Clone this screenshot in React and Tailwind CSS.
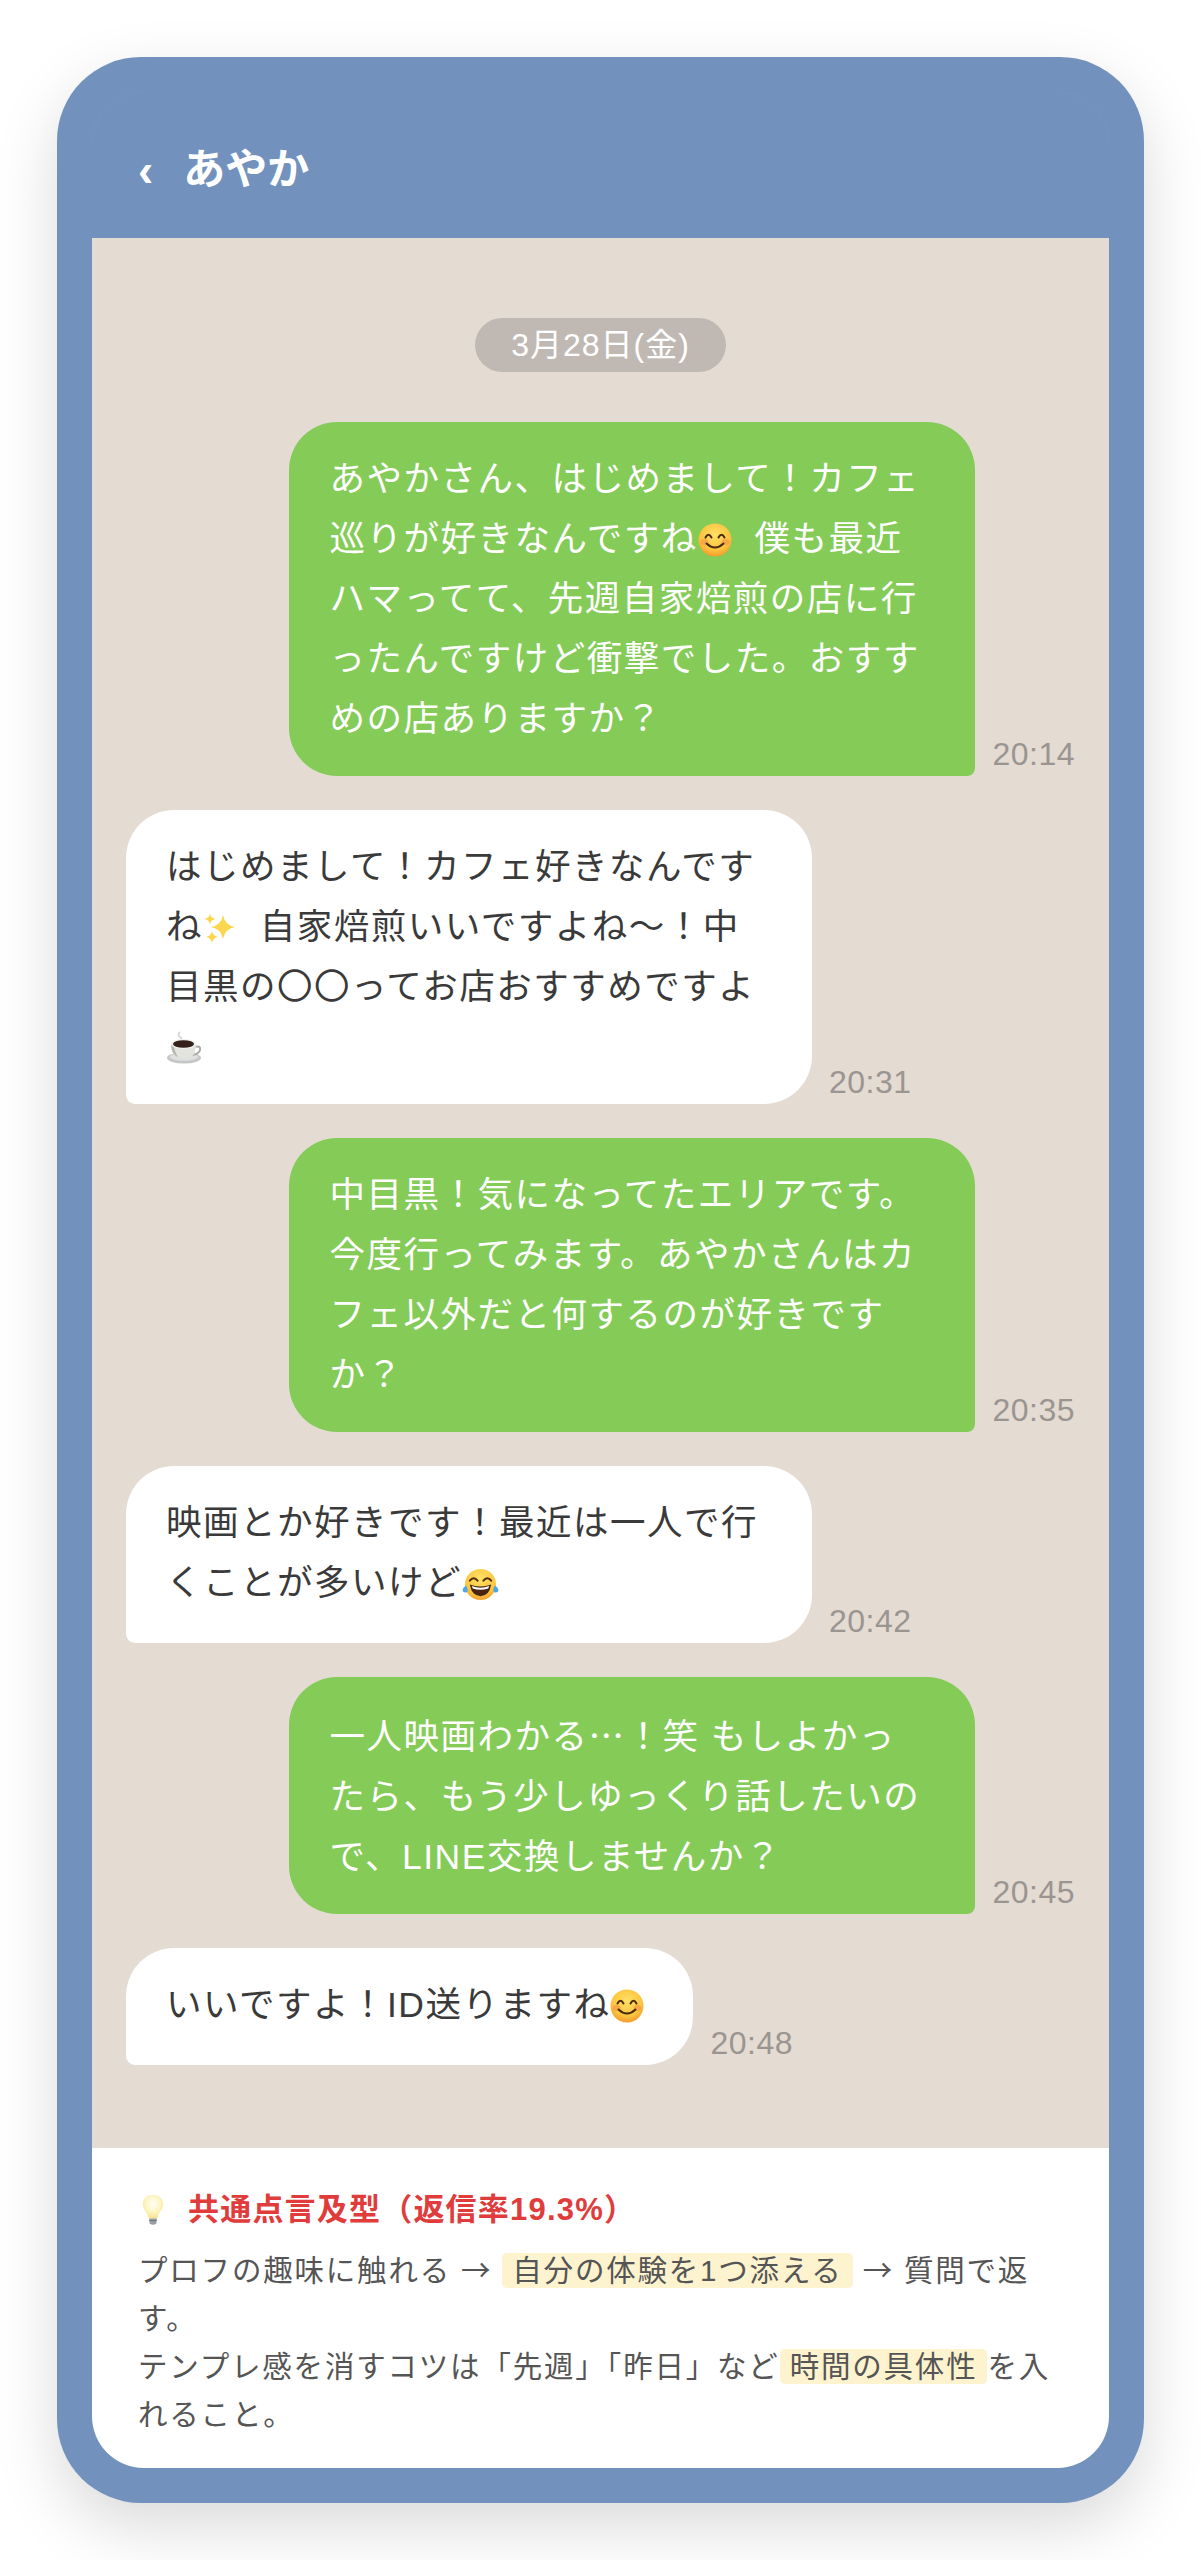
import React from 'react';

const FONT = "font-['Liberation_Sans','Noto_Sans_CJK_JP',sans-serif]";

// Punctuation that should come from the CJK face, not Liberation
const Cjk = ({ children }) => <span className="font-['Noto_Sans_CJK_JP',sans-serif]">{children}</span>;

// --- Emoji drawings (no colour emoji font on the page) ---
const SmileEmoji = () => (
    <svg viewBox="0 0 34 34" className="inline-block w-[34px] h-[34px] align-[-6px]">
        <defs>
            <radialGradient id="smileFace" cx="50%" cy="35%" r="70%">
                <stop offset="0%" stopColor="#ffe066" />
                <stop offset="65%" stopColor="#fcc43c" />
                <stop offset="100%" stopColor="#f0912a" />
            </radialGradient>
        </defs>
        <circle cx="17" cy="17" r="16.5" fill="url(#smileFace)" />
        <ellipse cx="6.5" cy="19" rx="4" ry="3" fill="#f58a4a" opacity="0.55" />
        <ellipse cx="27.5" cy="19" rx="4" ry="3" fill="#f58a4a" opacity="0.55" />
        <path d="M7.5 14.5 Q10.5 9 13.5 14.5" fill="none" stroke="#4a2c10" strokeWidth="2" strokeLinecap="round" />
        <path d="M20.5 14.5 Q23.5 9 26.5 14.5" fill="none" stroke="#4a2c10" strokeWidth="2" strokeLinecap="round" />
        <path d="M8.5 20.5 Q17 28.5 25.5 20.5" fill="none" stroke="#4a2c10" strokeWidth="2" strokeLinecap="round" />
    </svg>
);

const JoyEmoji = () => (
    <svg viewBox="0 0 38 34" className="inline-block w-[37px] h-[33px] align-[-6px]">
        <defs>
            <radialGradient id="joyFace" cx="50%" cy="30%" r="75%">
                <stop offset="0%" stopColor="#ffe066" />
                <stop offset="70%" stopColor="#fcc43c" />
                <stop offset="100%" stopColor="#f09a2a" />
            </radialGradient>
        </defs>
        <circle cx="19" cy="17" r="16" fill="url(#joyFace)" />
        <path d="M8 13 Q12 8 16 13" fill="none" stroke="#4a2c10" strokeWidth="2" strokeLinecap="round" />
        <path d="M22 13 Q26 8 30 13" fill="none" stroke="#4a2c10" strokeWidth="2" strokeLinecap="round" />
        <path d="M8 17 Q19 21 30 17 Q28 29 19 29 Q10 29 8 17Z" fill="#4a2410" />
        <path d="M10 18.5 Q19 22 28 18.5 L27 21 Q19 24 11 21Z" fill="#fff" />
        <path d="M4 18 Q7 22 5 25 Q1 26 0.5 23 Q1 20 4 18Z" fill="#4aa8e8" />
        <path d="M34 18 Q31 22 33 25 Q37 26 37.5 23 Q37 20 34 18Z" fill="#4aa8e8" />
    </svg>
);

const Sparkle = ({ x, y, r }) => (
    <path
        d={`M${x} ${y - r} Q${x + r * 0.15} ${y - r * 0.15} ${x + r} ${y} Q${x + r * 0.15} ${y + r * 0.15} ${x} ${y + r} Q${x - r * 0.15} ${y + r * 0.15} ${x - r} ${y} Q${x - r * 0.15} ${y - r * 0.15} ${x} ${y - r}Z`}
        fill="#fbd64e"
    />
);

const SparklesEmoji = () => (
    <svg viewBox="0 0 34 34" className="inline-block w-[34px] h-[34px] align-[-6px]">
        <Sparkle x={20} y={16} r={12} />
        <Sparkle x={7} y={8} r={5.5} />
        <Sparkle x={9} y={26} r={6} />
    </svg>
);

const CoffeeEmoji = () => (
    <svg viewBox="0 0 36 36" className="inline-block w-[36px] h-[36px] align-[-6px]">
        <path d="M14 3 Q11 6 14 8 Q17 10 14 12" fill="none" stroke="#d8d8d8" strokeWidth="2" />
        <ellipse cx="18" cy="29" rx="17" ry="5.5" fill="#c4c7c6" />
        <ellipse cx="18" cy="28" rx="14" ry="3.8" fill="#dfe1e0" />
        <path d="M28 18 Q35 16 34 21 Q33 25 26 26" fill="none" stroke="#a9aba6" strokeWidth="2" />
        <path d="M5 15 Q5 28 14 29 L22 29 Q30 28 30 15Z" fill="#e4e4de" />
        <path d="M5 16 Q6 26 12 28 Q8 22 8 16Z" fill="#b5b6ad" />
        <ellipse cx="17.5" cy="15" rx="12.5" ry="5" fill="#f0f0ec" />
        <ellipse cx="17.5" cy="15" rx="10.5" ry="3.8" fill="#33211a" />
    </svg>
);

const BulbEmoji = () => (
    <svg viewBox="0 0 26 38" className="w-[22px] h-[34px] shrink-0">
        <defs>
            <radialGradient id="bulbGlass" cx="50%" cy="38%" r="60%">
                <stop offset="0%" stopColor="#fffef5" />
                <stop offset="60%" stopColor="#fdf5c4" />
                <stop offset="100%" stopColor="#f8e58e" />
            </radialGradient>
        </defs>
        <path d="M13 1 C5 1 1 6.5 1 12.5 C1 19 7 22 8 29 L18 29 C19 22 25 19 25 12.5 C25 6.5 21 1 13 1Z" fill="url(#bulbGlass)" />
        <path d="M8.5 29 L17.5 29 L17 35 Q13 38 9 35Z" fill="#9a9ea3" />
        <path d="M8.5 31.5 L17.5 31.5" stroke="#6f7479" strokeWidth="1.2" />
    </svg>
);

const MESSAGES = [
    {
        id: 1,
        mine: true,
        time: '20:14',
        body: <>あやかさん、はじめまして！カフェ巡りが好きなんですね<SmileEmoji />&nbsp; 僕も最近ハマってて、先週自家焙煎の店に行ったんですけど衝撃でした。おすすめの店ありますか？</>,
    },
    {
        id: 2,
        mine: false,
        time: '20:31',
        body: <>はじめまして！カフェ好きなんですね<SparklesEmoji />&nbsp; 自家焙煎いいですよね〜！中目黒の〇〇ってお店おすすめですよ<CoffeeEmoji /></>,
    },
    {
        id: 3,
        mine: true,
        time: '20:35',
        body: <>中目黒！気になってたエリアです。今度行ってみます。あやかさんはカフェ以外だと何するのが好きですか？</>,
    },
    {
        id: 4,
        mine: false,
        tall: true,
        time: '20:42',
        body: <>映画とか好きです！最近は一人で行くことが多いけど<JoyEmoji /></>,
    },
    {
        id: 5,
        mine: true,
        time: '20:45',
        body: <>一人映画わかる<Cjk>…</Cjk>！笑 もしよかっ<br />たら、もう少しゆっくり話したいので、LINE交換しませんか？</>,
    },
    {
        id: 6,
        mine: false,
        tall: true,
        time: '20:48',
        body: <>いいですよ！ID送りますね<span className="mr-[9px]"><SmileEmoji /></span></>,
    },
];

const Bubble = ({ message }) => {
    const shape = message.mine
        ? 'bg-[#84cb57] text-white rounded-[48px] rounded-br-[8px]'
        : 'bg-white text-[#3a3a3a] rounded-[48px] rounded-bl-[9px]';

    return (
        <div className={`flex items-end gap-[17px] ${message.mine ? 'justify-end' : 'justify-start'}`}>
            <p className={`max-w-[686px] px-[40px] pt-[27px] text-[35.5px] leading-[60px] tracking-[1.5px] ${message.tall ? 'pb-[30px]' : 'pb-[27px]'} ${shape}`}>
                {message.body}
            </p>
            <span className="text-[32px] leading-[44px] tracking-[0.5px] text-[#9b9591]">{message.time}</span>
        </div>
    );
};

const Mark = ({ children }) => (
    <span className="rounded-[5px] bg-[#fdf3cf] px-[10px] py-[1px]">{children}</span>
);

export default function App() {
    return (
        <div className={`min-h-[2560px] bg-white pt-[57px] ${FONT}`}>
            <div className="mx-[57px] h-[2446px] rounded-[84px] bg-[#7292bd] p-[35px] shadow-[0_24px_64px_rgba(0,0,0,0.15)]">
                <div className="flex h-full flex-col overflow-hidden rounded-[52px] bg-[#88a4c8]">
                    <header className="flex h-[146px] shrink-0 items-center gap-[30px] bg-[#7292bd] pl-[46px] pt-[10px] font-bold text-white">
                        <span className="text-[46px] leading-none">‹</span>
                        <h1 className="text-[42px] leading-none">あやか</h1>
                    </header>

                    <main className="flex-1 bg-[#e4dbd3] px-[34px] pt-[80px]">
                        <div className="mb-[50px] flex justify-center">
                            <span className="flex h-[54px] items-center rounded-full bg-[#c0b9b3] px-[36px] text-[32px] tracking-[1px] text-white">3月28日(金)</span>
                        </div>
                        <div className="flex flex-col gap-[34px]">
                            {MESSAGES.map(m => <Bubble key={m.id} message={m} />)}
                        </div>
                    </main>

                    <footer className="h-[320px] shrink-0 bg-white pl-[46px] pr-[50px] pt-[39px]">
                        <div className="mb-[11px] flex items-center gap-[24px] pl-[4px] text-[31px] font-bold leading-[46px] tracking-[1.2px] text-[#e03c3c]">
                            <BulbEmoji />
                            <span>共通点言及型（返信率19.3%）</span>
                        </div>
                        <p className="text-[29.5px] leading-[48px] tracking-[1.8px] text-[#555555]">
                            プロフの趣味に触れる <Cjk>→</Cjk> <Mark>自分の体験を1つ添える</Mark> <Cjk>→</Cjk> 質問で返す。
                            <br />
                            テンプレ感を消すコツは「先週」「昨日」など<Mark>時間の具体性</Mark>を入れること。
                        </p>
                    </footer>
                </div>
            </div>
        </div>
    );
}
